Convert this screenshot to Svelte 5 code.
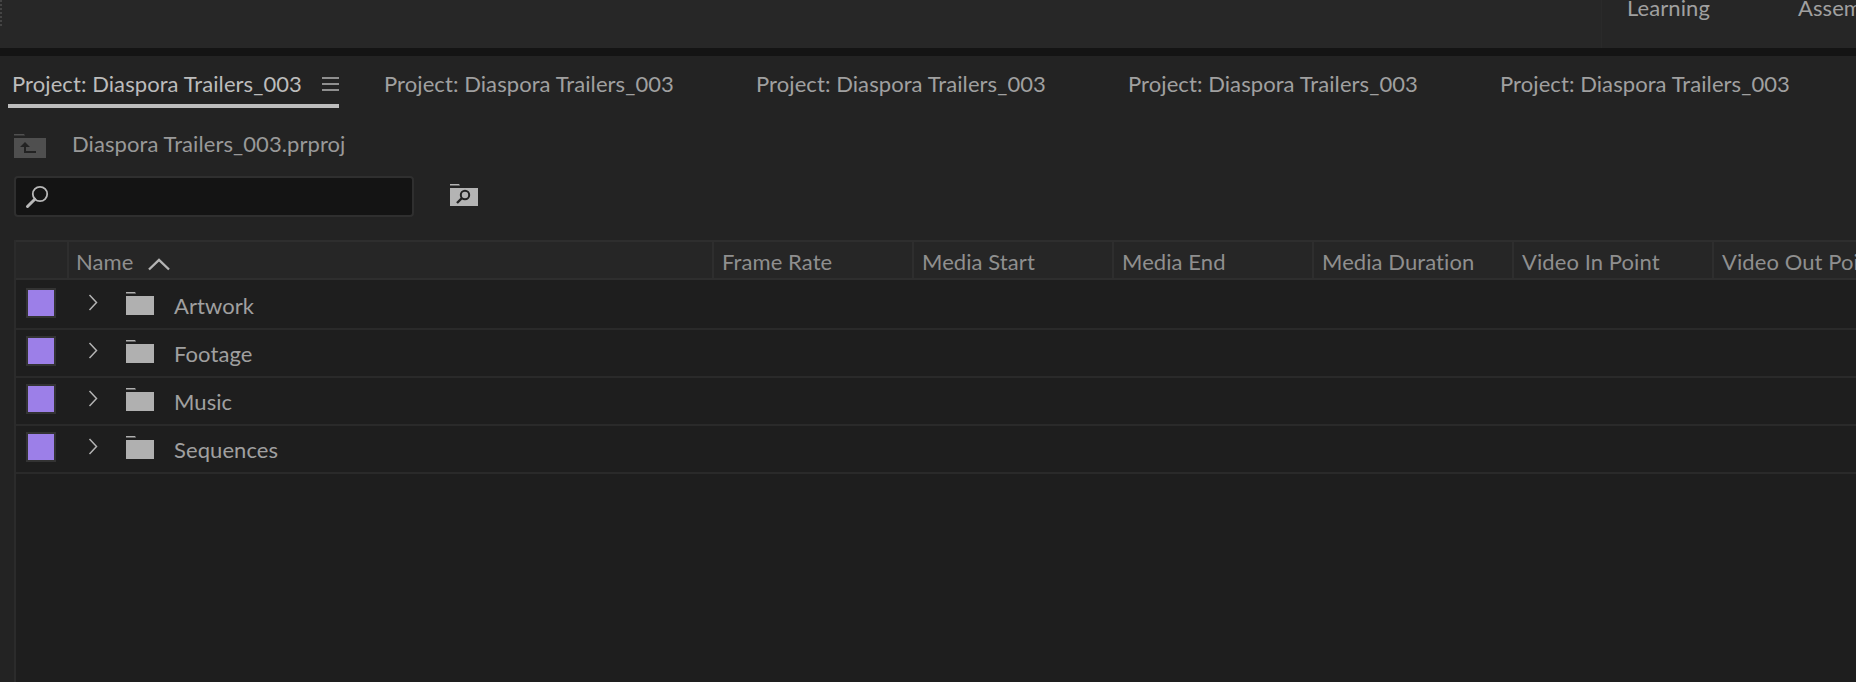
<script lang="ts">
  const tabs = [1, 2, 3, 4];
  const columns = ["Frame Rate", "Media Start", "Media End", "Media Duration", "Video In Point", "Video Out Point"];
  const bins = ["Artwork", "Footage", "Music", "Sequences"];
</script>

<div class="app">
  <header class="topbar">
    <div class="grip"></div>
    <div class="workspaces">
      <span class="ws">Learning</span>
      <span class="ws">Assembly</span>
    </div>
  </header>

  <section class="panel">
    <nav class="tabs">
      <div class="tab active">
        <span>Project: Diaspora Trailers_003</span>
        <svg class="menu" width="17" height="14" viewBox="0 0 17 14" aria-hidden="true">
          <path d="M0 1h17M0 7h17M0 13h17" stroke="#b4b4b4" stroke-width="1.400" fill="none" />
        </svg>
      </div>
      {#each tabs as t (t)}
        <div class="tab">Project: Diaspora Trailers_003</div>
      {/each}
    </nav>

    <div class="path">
      <svg width="32" height="24" viewBox="0 0 32 24" aria-hidden="true">
        <path d="M0 0h10l1 1.500H0z" fill="#4f4f4f" />
        <path d="M0 4h32v20H0z" fill="#4f4f4f" />
        <path d="M11 8l-5 5h4v6h12v-2H12v-4h4z" fill="#232323" />
      </svg>
      <span>Diaspora Trailers_003.prproj</span>
    </div>

    <div class="search-row">
      <div class="search">
        <svg width="24" height="24" viewBox="0 0 24 24" aria-hidden="true">
          <circle cx="15" cy="9" r="7.200" stroke="#b8b8b8" stroke-width="1.800" fill="none" />
          <path d="M9.800 14.200L2.500 21.500" stroke="#b8b8b8" stroke-width="3" stroke-linecap="round" />
        </svg>
      </div>
      <svg class="find" width="28" height="22" viewBox="0 0 28 22" aria-hidden="true">
        <path d="M0 0h9l1 1.500H0z" fill="#b4b4b4" />
        <path d="M0 4h28v18H0z" fill="#b4b4b4" />
        <circle cx="15" cy="11" r="4.200" stroke="#232323" stroke-width="2" fill="none" />
        <path d="M12 14L7 19" stroke="#232323" stroke-width="2.400" />
      </svg>
    </div>

    <div class="table">
      <div class="head">
        <div class="label-col"></div>
        <div class="name-col">
          <span>Name</span>
          <svg width="24" height="14" viewBox="0 0 24 14" aria-hidden="true">
            <path d="M2 12.500L12 3l10 9.500" stroke="#b4b4b4" stroke-width="2.400" fill="none" />
          </svg>
        </div>
        {#each columns as c (c)}
          <div class="col">{c}</div>
        {/each}
      </div>
      <div class="rows">
        {#each bins as b (b)}
          <div class="row">
            <div class="swatch"></div>
            <svg class="chev" width="10" height="17" viewBox="0 0 10 17" aria-hidden="true">
              <path d="M1.500 1l7 7.500-7 7.500" stroke="#b4b4b4" stroke-width="1.500" fill="none" />
            </svg>
            <svg class="folder" width="28" height="23" viewBox="0 0 28 23" aria-hidden="true">
              <path d="M0 0h9l1 1.500H0z" fill="#b0b0b0" />
              <path d="M0 4h28v19H0z" fill="#b0b0b0" />
            </svg>
            <span class="bin">{b}</span>
          </div>
        {/each}
      </div>
    </div>
  </section>
</div>

<style>
  :global(body) {
    margin: 0;
    background: #232323;
  }

  .app {
    width: 1856px;
    height: 682px;
    overflow: hidden;
    display: flex;
    flex-direction: column;
    font-family: Lato, "Open Sans", sans-serif;
    font-size: 22px;
    letter-spacing: 0.08px;
    color: #979797;
  }

  .topbar {
    height: 48px;
    flex: none;
    background: #272727;
    border-bottom: 8px solid #141414;
    display: flex;
    justify-content: space-between;
    overflow: hidden;
  }
  .grip {
    width: 0;
    height: 26px;
    border-left: 2px dotted #444;
  }
  .workspaces {
    width: 255px;
    flex: none;
    box-sizing: border-box;
    display: flex;
    background: #262626;
    border-left: 1px solid #2a2a2a;
    padding-left: 25px;
    gap: 88px;
    color: #a0a0a0;
    line-height: 16px;
    white-space: nowrap;
  }

  .panel {
    flex: 1;
    background: #232323;
    display: flex;
    flex-direction: column;
  }

  .tabs {
    display: flex;
    height: 52px;
    padding-left: 8px;
    color: #a0a0a0;
  }
  .tab {
    width: 372px;
    flex: none;
    box-sizing: border-box;
    display: flex;
    align-items: center;
    padding: 2px 0 0 4px;
    white-space: nowrap;
  }
  .tab.active {
    width: 331px;
    margin-right: 41px;
    padding-top: 6px;
    justify-content: space-between;
    color: #bcbcbc;
    border-bottom: 4px solid #bdbdbd;
  }
  .menu {
    margin-top: 2px;
  }

  .path {
    display: flex;
    align-items: center;
    gap: 26px;
    padding: 26px 0 0 14px;
    height: 24px;
    color: #999;
  }
  .path span {
    margin-top: -6px;
  }

  .search-row {
    display: flex;
    align-items: center;
    gap: 36px;
    padding: 18px 0 0 14px;
  }
  .search {
    width: 400px;
    height: 41px;
    box-sizing: border-box;
    background: #141414;
    border: 2px solid #2f2f2f;
    border-radius: 4px;
    display: flex;
    align-items: center;
    padding-left: 9px;
  }
  .find {
    margin-top: -3px;
  }

  .table {
    margin: 23px 0 0 14px;
    border-left: 2px solid #2b2b2b;
    flex: 1;
    background: #1e1e1e;
  }
  .head {
    display: flex;
    height: 40px;
    box-sizing: border-box;
    background: #262626;
    border-top: 2px solid #2e2e2e;
    border-bottom: 2px solid #2e2e2e;
    align-items: stretch;
    color: #8f8f8f;
    white-space: nowrap;
  }
  .label-col {
    width: 53px;
    flex: none;
    box-sizing: border-box;
    border-right: 2px solid #2e2e2e;
  }
  .name-col {
    width: 645px;
    flex: none;
    box-sizing: border-box;
    padding: 3px 0 0 7px;
    display: flex;
    align-items: center;
    gap: 14px;
    border-right: 2px solid #2e2e2e;
  }
  .name-col svg {
    margin-top: 5px;
  }
  .col {
    width: 200px;
    flex: none;
    box-sizing: border-box;
    padding: 3px 0 0 8px;
    display: flex;
    align-items: center;
    border-right: 2px solid #2e2e2e;
  }

  .rows {
    padding-top: 2px;
  }
  .row {
    height: 48px;
    box-sizing: border-box;
    padding-bottom: 4px;
    display: flex;
    align-items: center;
    border-bottom: 2px solid #2a2a2a;
    color: #a0a0a0;
  }
  .swatch {
    width: 30px;
    height: 30px;
    flex: none;
    box-sizing: border-box;
    margin-left: 10px;
    background: #9c7fe8;
    border: 2px solid #333;
  }
  .chev {
    margin-left: 32px;
    flex: none;
    margin-top: -2px;
  }
  .folder {
    margin-left: 28px;
    flex: none;
  }
  .bin {
    margin-left: 20px;
    margin-top: 5px;
  }
</style>
